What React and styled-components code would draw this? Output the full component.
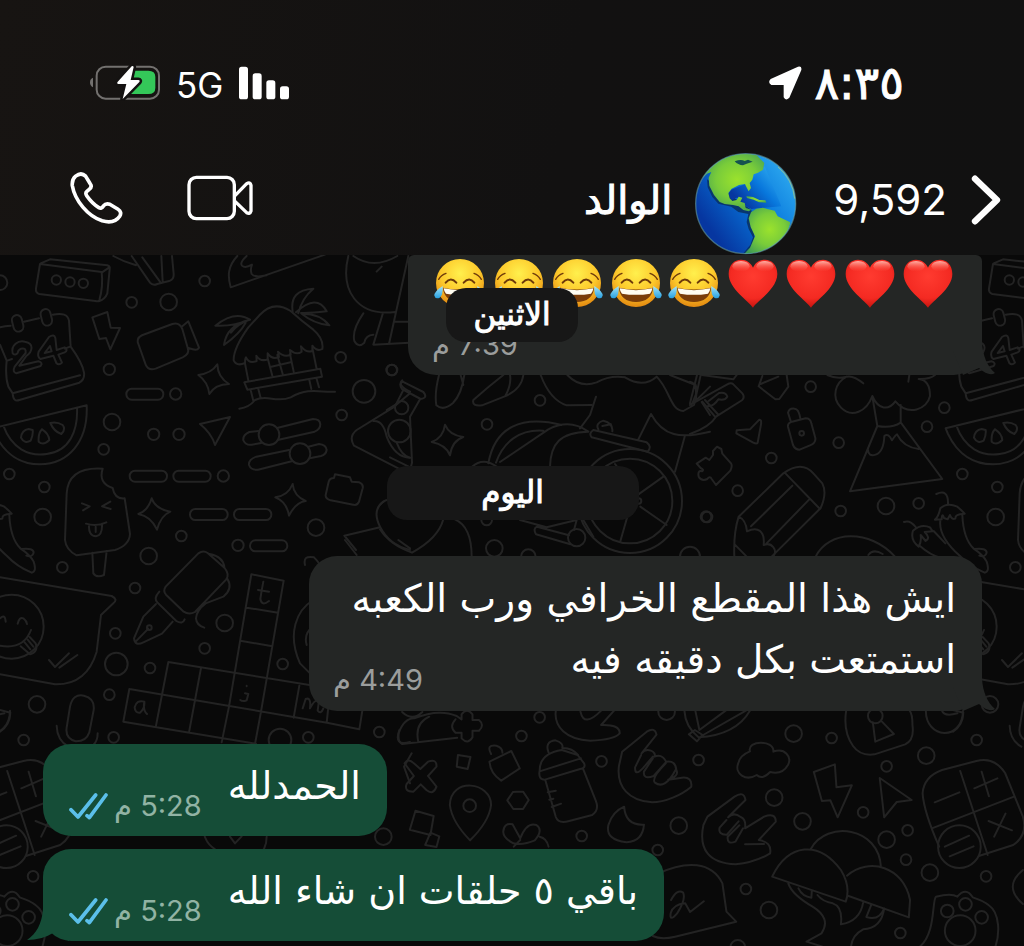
import React from "react";
import styled, { createGlobalStyle } from "styled-components";

const GlobalStyle = createGlobalStyle`
  *, *::before, *::after { box-sizing: border-box; }
  html, body, #root { height: 100%; }
  body {
    margin: 0;
    background: #090909;
    color: #ffffff;
    font-family: Inter, "DejaVu Sans", sans-serif;
  }
  svg { display: block; flex: none; }
`;

const Screen = styled.div`
  display: flex;
  flex-direction: column;
  min-height: 100%;
  overflow: hidden;
`;

const TopArea = styled.header`
  position: relative;
  z-index: 2;
  background: linear-gradient(100deg, #171412 0%, #121111 55%, #111111 100%);
`;

const StatusBar = styled.div`
  display: flex;
  align-items: center;
  justify-content: space-between;
  height: 152px;
  padding: 14px 120px 0 90px;
`;

const StatusGroup = styled.div`
  display: flex;
  align-items: center;
  gap: ${(p) => p.$gap}px;
`;

const Clock = styled.time`
  font: 46px/48px "DejaVu Sans", sans-serif;
  -webkit-text-stroke: 1px currentColor;
`;

const Network = styled.span`
  padding-top: 4px;
  font-size: 35px;
  line-height: 40px;
`;

const NavBar = styled.nav`
  display: flex;
  align-items: center;
  height: 103px;
  padding: 0 23px 0 70px;
`;

const BackButton = styled.button`
  display: flex;
  align-items: center;
  gap: 24px;
  padding: 0 0 8px;
  border: 0;
  background: none;
  color: #ffffff;
  font: 42px/52px Inter, sans-serif;
`;

const ContactButton = styled.button`
  display: flex;
  align-items: center;
  gap: 22px;
  margin: 0 35px 0 auto;
  padding: 0;
  border: 0;
  background: none;
  color: #ffffff;
`;

const ContactName = styled.span`
  padding-bottom: 8px;
  font: 40px/52px "DejaVu Sans", sans-serif;
  -webkit-text-stroke: 1px currentColor;
`;

const IconButton = styled.button`
  margin-right: ${(p) => p.$gap || 0}px;
  padding: 0 0 12px;
  border: 0;
  background: none;
`;

const Chat = styled.main`
  position: relative;
  flex: 1;
  display: flex;
  flex-direction: column;
  align-items: flex-start;
  padding: 0 42px 5px 43px;
`;

const Wallpaper = styled.svg`
  position: absolute;
  inset: 0;
  width: 100%;
  height: 100%;
  fill: none;
  stroke: #232323;
  stroke-width: 2;
  stroke-linecap: round;
  stroke-linejoin: round;
  & * { vector-effect: non-scaling-stroke; }
`;

const DateChip = styled.div`
  position: relative;
  align-self: center;
  min-width: ${(p) => (p.$wide ? 252 : 132)}px;
  height: 54px;
  margin: ${(p) => (p.$wide ? "91px 0 36px" : 0)};
  border-radius: 20px;
  background: #171717;
  font: 31px/52px "DejaVu Sans", sans-serif;
  -webkit-text-stroke: 1px currentColor;
  text-align: center;
`;

const FloatingDate = styled.div`
  position: absolute;
  z-index: 1;
  top: 33px;
  left: 0;
  right: 0;
  display: flex;
  justify-content: center;
`;

const Bubble = styled.article`
  position: relative;
  align-self: ${(p) => (p.$out ? "flex-end" : "flex-start")};
  max-width: 673px;
  margin-top: ${(p) => p.$space || 0}px;
  border-radius: 28px;
  background: ${(p) => (p.$out ? "#154d37" : "#242625")};
`;

const LongBubble = styled(Bubble)`
  display: flow-root;
  padding: 12px 26px 9px 24px;
`;

const ShortBubble = styled(Bubble)`
  display: flex;
  align-items: flex-end;
  gap: 26px;
  padding: 12px 26px 8px;
`;

const EmojiBubble = styled(Bubble)`
  display: flex;
  flex-direction: column;
  padding: 3px 26px 8px 24px;
  border-radius: 6px 6px 28px 28px;
`;

const MessageText = styled.p`
  margin: 0;
  padding-bottom: 12px;
  font: 38px/60px "DejaVu Sans", sans-serif;
  white-space: nowrap;
`;

const LongText = styled.span`
  font: 39px/61px "DejaVu Sans", sans-serif;
`;

const EmojiRow = styled.div`
  display: flex;
  justify-content: space-between;
  width: 520px;
  margin: 0 2px;
`;

const Meta = styled.span`
  display: flex;
  align-items: center;
  align-self: flex-end;
  gap: 6px;
  color: ${(p) => (p.$out ? "#91b3a4" : "#9b9d9c")};
  font: 29px/44px Inter, "DejaVu Sans", sans-serif;
  white-space: nowrap;
`;

const FloatedMeta = styled(Meta)`
  float: left;
  margin-top: 29px;
`;

const EmojiMeta = styled(Meta)`
  margin-top: 15px;
`;

const TailShape = styled.svg`
  position: absolute;
  bottom: 0;
  ${(p) => (p.$out ? "left: -16px;" : "right: -13px;")}
  fill: ${(p) => (p.$out ? "#154d37" : "#242625")};
`;

function Tail({ out }) {
  return out ? (
    <TailShape $out width="42" height="44" viewBox="0 0 42 44" aria-hidden="true">
      <path d="M16 0V12C15 27 9 37 0 43Q15 43 26 36L42 44V0Z" />
    </TailShape>
  ) : (
    <TailShape width="42" height="44" viewBox="0 0 42 44" overflow="visible" aria-hidden="true">
      <path d="M29 0V12C30 25 34 35 42 42Q36 46 26 37L10 44L0 20V0Z" />
    </TailShape>
  );
}

function Ticks() {
  return (
    <svg width="39" height="27" viewBox="0 0 117 81" fill="none" stroke="#5bbfea" strokeWidth="11" strokeLinecap="round" strokeLinejoin="round" role="img" aria-label="مقروءة">
      <path d="M6 50L27 72L80 6M54 68L61 74L111 6" />
    </svg>
  );
}

function JoyFace() {
  return (
    <svg width="52" height="50" viewBox="0 0 156 150" role="img" aria-label="😂">
      <defs>
        <radialGradient id="faceFill" cx="50%" cy="30%" r="72%">
          <stop offset="0" stopColor="#fff04d" />
          <stop offset=".55" stopColor="#fdca2c" />
          <stop offset="1" stopColor="#e2860f" />
        </radialGradient>
        <linearGradient id="tearFill" x1="0" y1="0" x2="0" y2="1">
          <stop offset="0" stopColor="#a5e6fb" />
          <stop offset="1" stopColor="#259fe0" />
        </linearGradient>
      </defs>
      <circle cx="78" cy="75" r="72" fill="url(#faceFill)" />
      <g fill="none" stroke="#6d3a0b" strokeLinecap="round">
        <path d="M14 64Q21 51 36 46M142 64Q135 51 120 46" strokeWidth="4" />
        <path d="M35 74Q50 55 67 74M89 74Q106 55 121 74" strokeWidth="6" />
      </g>
      <path d="M27 89Q78 100 129 89C128 116 107 132 78 132S28 116 27 89Z" fill="#7a3d0a" />
      <path d="M29 91Q78 102 127 91Q126 101 120 107Q78 114 36 107Q30 101 29 91Z" fill="#fffdf2" />
      <path d="M26 84Q28 112 16 120Q4 124 1 113Q0 101 26 84ZM130 84Q128 112 140 120Q152 124 155 113Q156 101 130 84Z" fill="url(#tearFill)" />
    </svg>
  );
}

function Heart() {
  return (
    <svg width="52" height="50" viewBox="0 0 156 150" role="img" aria-label="❤️">
      <defs>
        <radialGradient id="heartFill" cx="50%" cy="35%" r="65%">
          <stop offset="0" stopColor="#ff3b30" />
          <stop offset=".7" stopColor="#f42a22" />
          <stop offset="1" stopColor="#c5140f" />
        </radialGradient>
        <linearGradient id="heartShine" x1="0" y1="0" x2="0" y2="1">
          <stop offset="0" stopColor="#ffc0b5" stopOpacity=".9" />
          <stop offset="1" stopColor="#ff5a4b" stopOpacity="0" />
        </linearGradient>
      </defs>
      <path d="M78 149C66 130 5 92 5 48C5 20 22 5 42 5C59 5 72 15 78 29C84 15 97 5 114 5C134 5 151 20 151 48C151 92 90 130 78 149Z" fill="url(#heartFill)" />
      <ellipse cx="42" cy="25" rx="26" ry="16" fill="url(#heartShine)" />
      <ellipse cx="114" cy="25" rx="26" ry="16" fill="url(#heartShine)" />
    </svg>
  );
}

function Battery() {
  return (
    <svg width="70" height="36" viewBox="90 76 210 108" role="img" aria-label="البطارية قيد الشحن">
      <path d="M99 114V143Q90 139 90 128T99 114Z" fill="#73716f" />
      <rect x="110" y="81" width="187" height="96" rx="27" fill="none" stroke="#73716f" strokeWidth="6" />
      <path d="M208 93H265Q286 93 286 112V144Q286 163 265 163H208Z" fill="#34c759" />
      <path d="M215 80L172 128Q170 133 175 133H199L188 178L238 127Q241 121 235 121H212L221 82Q219 77 215 80Z" fill="#fff" stroke="#141211" strokeWidth="15" paintOrder="stroke" strokeLinejoin="round" />
    </svg>
  );
}

function Signal() {
  return (
    <svg width="51" height="34" viewBox="540 78 153 102" fill="#fff" role="img" aria-label="قوة الإشارة">
      <rect x="540" y="80" width="27" height="98" rx="8" />
      <rect x="581" y="100" width="27" height="78" rx="8" />
      <rect x="622" y="121" width="27" height="57" rx="8" />
      <rect x="663" y="139" width="27" height="39" rx="8" />
    </svg>
  );
}

function LocationArrow() {
  return (
    <svg width="34" height="34" viewBox="623 80 102 102" fill="#fff" aria-hidden="true">
      <path d="M631 119L713 82Q725 79 723 92L687 175Q676 186 670 174V137H633Q621 130 631 119Z" />
    </svg>
  );
}

function Phone() {
  return (
    <svg width="53" height="54" viewBox="31 391 160 162" fill="none" stroke="#fff" strokeWidth="11" strokeLinejoin="round" aria-hidden="true">
      <path d="M48 406Q65 393 78 406L92 429Q99 438 89 446L82 452Q76 457 82 466Q98 489 118 501Q126 506 132 496Q139 487 151 491L176 506Q189 514 181 527C170 544 151 547 128 541C85 527 46 480 38 435Q36 416 48 406Z" />
    </svg>
  );
}

function Video() {
  return (
    <svg width="66" height="46" viewBox="379 402 198 138" fill="none" stroke="#fff" strokeWidth="10" strokeLinejoin="round" aria-hidden="true">
      <rect x="385" y="409" width="136" height="124" rx="22" />
      <path d="M523 464L558 428Q569 422 571 433V510Q568 520 558 515L523 481" />
    </svg>
  );
}

function Chevron() {
  return (
    <svg width="30" height="50" viewBox="1233 403 90 150" fill="none" stroke="#fff" strokeWidth="19" strokeLinecap="round" strokeLinejoin="round" aria-hidden="true">
      <path d="M1245 414L1311 478L1245 542" />
    </svg>
  );
}

function Globe() {
  return (
    <svg width="104" height="104" viewBox="398 337 312 312" role="img" aria-label="🌎">
      <defs>
        <linearGradient id="ocean" x1=".95" y1=".25" x2=".2" y2=".8">
          <stop offset="0" stopColor="#2ba6ee" />
          <stop offset=".45" stopColor="#0877dc" />
          <stop offset="1" stopColor="#0636a0" />
        </linearGradient>
        <radialGradient id="land" cx="57%" cy="45%" r="65%">
          <stop offset="0" stopColor="#9be22d" />
          <stop offset=".5" stopColor="#79cc3a" />
          <stop offset="1" stopColor="#3c9a55" />
        </radialGradient>
        <clipPath id="globeClip"><circle cx="553" cy="492" r="150" /></clipPath>
      </defs>
      <g clipPath="url(#globeClip)">
        <rect x="398" y="337" width="312" height="312" fill="url(#ocean)" />
        <path d="M442 414L444 438L458 467L476 487L515 496L536 512L566 518L561 542L567 563L580 588L572 610L545 643L590 640L575 505Z" fill="#08366f" transform="translate(-5 5)" />
        <path fill="url(#ocean)" d="M510 450L560 430L610 380L660 500L570 508L548 496L534 488L540 474L525 474L510 482L501 462Z" />
        <g fill="url(#land)">
          <path d="M418 420C440 360 505 334 585 345L609 370L605 390L590 399L577 404L573 420L565 430L569 445L562 455L554 440L551 433L533 436L511 447L501 460L505 476L513 484L526 481L532 471L543 474L537 486L550 490L553 505L570 510L562 515L546 511L532 500L515 496L490 493L475 487L458 466L444 438L442 414L450 397L437 402Z" />
          <path d="M569 518L585 507L605 504L618 508L640 513L649 530L671 540L687 548C680 590 643 631 594 646L543 649L566 624L581 590L568 562L562 536Z" />
          <path d="M555 469L575 472L594 481L612 482L615 489L593 488L577 480L557 475Z" />
        </g>
        <path d="M520 365Q540 357 550 364L560 360L574 366L556 372L545 377Q530 376 520 365Z" fill="#16534f" />
      </g>
      <circle cx="553" cy="492" r="150" fill="none" stroke="#6daab0" strokeOpacity=".55" strokeWidth="4" />
      <path d="M650 382Q694 420 700 477" fill="none" stroke="#bfd66b" strokeOpacity=".6" strokeWidth="3" />
    </svg>
  );
}

/* Rings are listed as [x, y, r]; ratio keeps them round in a group scaled unevenly. */
function Rings({ items, ratio = 1 }) {
  return items.map(([x, y, r]) => <ellipse key={`${x}-${y}`} cx={x} cy={y} rx={r * ratio} ry={r} />);
}

function BeachDoodles() {
  return (
    <g transform="translate(0 -5) scale(.33333)">
      <Rings items={[[0,98,22],[169,90,14],[210,96,14],[250,100,14],[395,157,16],[506,156,25],[614,93,16],[328,358,17],[527,432,17],[336,516,25],[461,553,17],[537,553,17],[311,598,16],[28,672,16],[133,711,16],[128,801,25],[670,678,17],[544,858,16],[948,833,25],[1022,322,16],[1176,360,16],[1092,424,34],[1025,495,16],[714,886,17],[1205,473,20],[1198,543,34]]} />
      <path d="M120 42L305 66Q310 110 298 150Q296 156 286 153L118 132Q106 128 108 115ZM122 40L150 28L322 46Q331 48 329 58L322 130Q315 148 296 154M306 67L328 52" />
      <path d="M340 18Q370 35 408 46M395 18L450 98Q458 108 472 102L510 92Q522 88 521 72L516 18M427 22L482 98M484 18L488 95" />
      <path d="M712 18C682 50 683 80 692 112L975 14M740 18Q718 38 726 47Q735 56 756 44Q750 60 755 72Q764 84 800 76" />
      <path d="M1045 18C1020 120 1070 200 1185 186M1060 18Q1120 60 1192 18M1130 65L1145 50M1225 18L1167 282M1090 190Q1055 240 1063 273Q1075 295 1093 278Q1097 255 1120 254M1148 192L1120 284L1228 278M1185 215H1230" />
      <path d="M0 232Q15 228 32 227M72 215L117 205M158 194Q202 185 207 212L212 290Q248 340 252 368Q255 388 238 398L58 450Q40 458 38 430L240 376M0 284L20 332Q15 380 25 410L38 430M22 332L36 327M195 296L210 290" />
      <rect x="38" y="195" width="30" height="50" rx="15" transform="rotate(-14 53 220)" /><rect x="124" y="177" width="30" height="50" rx="15" transform="rotate(-14 139 202)" />
      <path d="M38 310C32 285 55 270 75 275C103 280 98 304 79 318L58 347L115 334Q130 338 122 348L49 370Q36 366 44 350L77 309Q79 292 63 296Q54 300 53 309Q46 318 38 310M116 305L147 261Q163 251 166 264L170 300L194 292Q206 300 194 307L175 314L186 338Q177 347 169 339L160 317L121 327Q111 320 116 305M134 309L155 304L150 288Z" />
      <path d="M277 202L322 186L332 233L360 234L331 298L318 264L298 267ZM436 252L517 222Q538 215 547 237L563 293Q570 312 548 322L467 356Q445 363 437 344L413 276Q411 259 436 252M545 230L565 214L597 293Q592 302 578 298L565 294" />
      <path d="M595 375Q635 370 652 343Q653 382 687 402Q645 403 628 432Q624 396 595 375M455 745Q466 777 511 785Q483 796 471 839Q453 799 415 792Q444 782 455 745M878 702Q881 737 917 753Q887 757 867 797Q860 755 826 742Q864 737 878 702" />
      <path d="M745 232Q700 295 701 331Q710 350 735 339Q735 322 738 322Q747 342 770 333L769 317Q781 336 803 328V310Q816 330 837 321L834 305Q852 324 872 314L870 300Q890 317 905 305L903 289Q920 310 937 303V287Q951 306 967 297Q972 266 940 239Q905 213 872 183Q820 150 779 195ZM735 340L745 392M803 325L817 377M870 312L881 365M938 298L950 357M733 397L961 356L966 380L742 419ZM832 315L848 372M814 350L872 337M752 420L760 452M775 417L782 444M928 390L934 417M950 387L957 412M718 476Q748 472 765 450C800 432 830 460 872 442C930 410 963 429 1005 425" />
      <path d="M750 209Q705 180 646 227Q700 230 750 209M750 209Q680 225 672 285Q720 250 737 218M750 209Q713 222 693 248M878 184Q868 120 940 116Q905 145 895 190M888 187Q950 130 980 184Q930 190 903 189M905 191Q960 190 988 226Q940 220 905 191" />
      <rect x="379" y="416" width="111" height="33" rx="16"/><rect x="389" y="662" width="112" height="33" rx="16"/><rect x="520" y="662" width="112" height="33" rx="16"/><rect x="570" y="777" width="113" height="33" rx="16"/><rect x="702" y="777" width="112" height="33" rx="16"/><rect x="750" y="871" width="112" height="33" rx="16"/>
      <path d="M-22 535L-15 552C15 615 65 643 120 643C205 642 265 575 260 466L-22 535M10 527C35 595 85 620 140 612C210 603 234 540 231 475M86 537Q65 540 63 563Q74 583 92 572Q100 555 98 540ZM126 538Q114 550 116 575Q130 588 148 570Q146 550 126 538M151 519Q162 545 184 552Q198 538 188 525Q170 514 151 519M600 522L690 501L645 585Q635 550 600 522" />
      <path d="M775 543L748 546Q728 555 730 571Q738 587 755 584L784 579M831 534L939 507Q960 507 961 523Q961 538 944 545L836 569M867 600L769 620Q745 629 747 645Q753 661 774 659L878 633M925 590L957 582Q978 584 980 600Q978 614 963 618L929 625"/><circle cx="807" cy="554" r="31"/><circle cx="900" cy="611" r="31"/>
      <path d="M308 656Q205 650 200 730L195 870Q198 900 230 916L345 900Q388 886 390 852L374 745Q344 748 338 714Q294 700 308 656M246 760L269 769L249 781M331 755L306 769L332 777M258 821Q290 831 319 817M267 824Q265 858 288 859Q308 855 306 821M287 830V846M277 908L280 970Q290 985 312 975L320 903" />
      <path d="M1230 430L1180 472L1070 540Q1045 560 1062 587L1195 655M1120 513Q1150 510 1160 560Q1185 623 1230 623M1207 391Q1190 405 1230 425M977 735L986 695Q989 684 1002 684L1005 673L1050 682L1055 695L1078 697Q1091 702 1088 715L1077 755Q1070 768 1060 764L992 751Q976 746 977 735M1150 755Q1115 780 1140 830C1160 870 1190 890 1230 900M1140 832L1033 857L1068 900" />
    </g>
  );
}

function WritingDoodles() {
  return (
    <g transform="translate(0 285) scale(.33333)">
      <Rings items={[[187,82,16],[446,48,25],[405,144,16],[346,280,16],[349,372,34],[450,384,16],[328,464,16],[111,493,25],[71,600,16],[341,592,16],[674,249,25],[614,325,16],[848,372,16],[925,592,16],[1138,576,16],[840,600,34],[35,260,96],[1150,890,25]]} />
      <path d="M0 112L335 168Q355 178 340 190L303 225L290 335Q260 435 165 433L0 403M0 235Q15 220 17 245M53 251Q58 230 70 235Q80 243 81 252M0 317Q70 330 93 270M62 319L90 343Q116 335 107 310L89 291M74 307L91 328M83 299L100 320M147 360L165 381L207 340M178 383L232 345" />
      <path d="M497 140L595 40Q610 30 623 39L674 84Q690 104 678 119L585 216Q567 226 551 215L498 164Q488 153 497 140M478 155Q460 175 472 187L529 243Q548 254 554 238M629 42Q670 50 673 82M682 116Q700 145 670 170L617 190Q590 210 588 235Q589 255 613 263M468 192L430 230L402 295Q405 320 430 307L486 281L518 245M407 305L445 266"/><circle cx="448" cy="263" r="7" />
      <path d="M754 103L851 122L783 515L765 612M754 103L687 500L665 607M740 203L834 218M721 302L817 319M505 366L1095 462L1078 568L981 548M505 366L467 562M603 384L567 577M898 437L881 533M370 545L768 611M388 447L981 548M388 447L370 545M990 455L980 548" />
      <path d="M790 125Q784 155 781 177Q785 200 807 183M774 150L807 155M433 485Q410 478 404 502Q405 520 420 518Q435 505 433 485Q428 510 441 522M735 460L745 462L740 481Q728 486 721 480M740 437V439M908 505L917 477Q934 470 930 505Q945 476 957 482L953 512Q963 524 970 505" />
      <path d="M210 500Q218 460 252 467Q285 475 281 510L268 577Q258 605 227 604Q195 595 200 563ZM170 557Q171 600 205 620M293 580Q293 603 280 615M0 510L31 518Q30 555 0 575M915 75Q908 45 942 52Q960 70 960 80M940 180C890 210 860 280 900 370L940 410M940 260Q910 280 920 315" />
      <path d="M610 870Q615 920 670 940M800 890Q800 930 770 950M690 890L705 910L725 889M1035 0L1070 45M1195 0L1230 25M1198 570Q1180 620 1230 606M1235 640L1212 680L1230 730" />
    </g>
  );
}

function TravelDoodles() {
  return (
    <g transform="translate(380 115) scale(.33333)">
      <Rings items={[[35,0,16],[480,91,16],[321,163,16],[343,535,25],[320,450,16],[590,503,26],[978,440,16],[445,560,22],[776,393,8]]} />
      <circle cx="750" cy="393" r="156"/><circle cx="750" cy="393" r="127"/>
      <path d="M68 35L130 66Q145 84 122 87L66 57Q55 41 68 35M70 60L48 103L20 120M120 88L90 140L96 278L92 293L30 262M50 218Q65 258 90 263M195 164Q208 196 250 201Q216 212 210 256Q198 224 155 216Q190 204 195 164" />
      <path d="M177 15Q163 70 169 106Q190 124 219 99Q245 72 253 15M242 15L250 45M370 15Q325 50 280 90Q275 110 306 106L380 77Q425 55 430 15M390 15Q395 42 376 78M482 15Q510 90 560 106L635 105M562 15Q600 55 650 37Q690 15 735 22Q790 55 830 20C870 60 870 120 910 123L942 105Q955 70 947 45L870 15M962 15L944 96L990 50M965 96L990 135" />
      <path d="M325 280C345 170 425 135 545 165M348 278C370 215 420 177 490 182M360 276L505 178Q570 145 625 185M510 290C512 220 540 187 625 185M648 80L630 135L600 175M640 180L800 217Q817 230 803 245L635 202Q625 190 640 180M655 178Q645 160 670 152Q700 160 697 184M667 168L693 163M775 208L813 132C850 200 900 207 990 185M914 200L885 305M276 290Q310 260 350 290" />
      <path d="M850 320L770 377M781 410L860 465M742 440L721 514M705 282L712 291M0 405Q12 390 24 390M0 478Q30 525 96 548Q175 505 190 448M225 448Q275 470 275 560M420 450L500 472L590 450L582 480M471 470L567 496M571 523L468 493Q458 476 471 470M610 450L640 500" />
    </g>
  );
}

function NatureDoodles() {
  return (
    <g transform="translate(690 115) scale(.33333)">
      <Rings items={[[362,50,16],[244,264,16],[143,362,16],[51,441,16],[446,218,16],[452,423,16],[588,408,25],[686,400,16],[763,113,16],[711,170,16],[335,190,7],[0,560,30]]} />
      <path d="M0 192Q60 170 78 140L157 90Q165 80 157 70L130 43Q123 37 112 43L0 105M37 95L75 140M45 90L83 132M54 108Q70 110 85 88Q105 92 112 80Q108 65 87 69L56 93M21 15L0 100M35 15L130 28L140 15M0 35Q20 40 18 72L5 105M217 18L206 49L256 88L268 87L295 50L290 15M212 42L265 20" />
      <path d="M140 181L180 178L208 149Q215 148 213 163L203 218Q200 223 190 218L139 190ZM302 153L294 128Q298 113 314 116Q326 116 331 145M306 155L347 145Q361 145 364 160L376 204Q378 219 360 226L329 239Q315 239 309 225L294 170Q292 160 306 155M69 255L69 243L81 230L94 237L97 251L123 280Q128 289 121 302L78 345L65 327Q60 317 52 327Q35 335 26 320Q22 300 36 304Q44 300 32 294L20 281L47 263L58 270Z" />
      <path d="M146 440L280 310Q335 270 370 310L397 340Q412 370 392 414L245 560M183 469L307 347M229 521L357 389M284 308L390 417M146 440Q168 450 171 484C205 467 225 485 221 525C245 515 264 540 250 560M146 440Q130 490 133 560M134 523L170 560M377 560C415 480 540 477 615 560M535 555Q550 535 578 552" />
      <path d="M470 20C435 38 423 83 453 113C485 145 530 125 547 78C565 120 596 122 616 94C655 140 712 118 720 78Q720 30 686 27M412 15Q440 28 470 20Q490 15 520 40M658 15L655 35M686 27Q720 28 735 15M548 85L562 168L480 364L757 327L632 157V105M562 168Q604 176 632 158M534 240Q535 261 557 254Q581 246 583 198Q595 188 606 211Q616 195 621 193Q640 231 686 237" />
      <path d="M739 372Q775 356 774 400M642 456Q660 449 677 471M735 449Q745 442 751 415Q771 396 802 410Q814 420 824 431L810 433Q796 435 796 446Q785 450 780 435L773 448L762 444Q756 426 755 448L735 449M751 452Q745 500 810 558Q840 590 884 608Q900 605 890 575Q880 555 850 535Q820 505 817 435M686 530Q660 510 669 482Q694 460 720 472L728 484L704 486Q723 504 707 513L692 495Q695 516 686 530M690 528Q720 555 755 565M731 483L766 520M854 537Q890 533 890 548Q887 563 868 557" />
    </g>
  );
}

function PlayDoodles() {
  return (
    <g transform="translate(390 445) scale(.4044 .33333)">
      <Rings ratio={0.824} items={[[370,52,16],[325,108,16],[523,184,16],[684,35,25],[763,180,16],[998,101,25],[1092,114,16],[1326,167,25],[1228,199,16],[950,293,25],[1170,337,16],[1020,364,25],[1228,419,25],[1280,391,16],[1276,479,16],[1335,518,25],[1474,529,16],[714,377,25],[474,408,16],[662,450,16],[880,567,16],[937,630,25],[860,742,22],[1262,699,16],[197,317,19],[1200,48,22],[1410,692,46],[1408,440,64],[1378,633,19],[1423,613,19],[1463,652,19]]} />
      <path d="M30 132Q18 125 22 98Q35 55 60 55Q120 25 165 48L177 58V43Q190 22 204 43V60H220Q235 75 220 92H204V112Q193 135 177 115V98H162Q145 80 162 58M70 126Q60 70 97 50M30 132L166 113M30 36Q55 65 80 36M410 32C405 80 435 118 495 122Q555 119 568 100Q569 73 522 75L554 32M471 35Q480 84 522 32M728 32Q730 80 763 112Q855 105 890 32M770 108L880 32M765 90L830 32M765 90L755 32M739 103L754 90L773 105L759 124Z" />
      <path d="M36 190Q45 173 59 190L75 207L94 185Q116 175 115 200L94 228L115 260Q107 287 90 270L76 253L58 275Q34 275 41 252L59 228ZM168 165L199 171L192 207L165 200ZM250 162Q237 133 263 137Q278 142 278 158M246 185L300 153L321 205L275 242Q248 220 246 185M313 275H329L343 300L329 327H305L290 301L304 276ZM148 315C150 230 250 245 250 315Q245 365 198 421Q153 365 148 315M63 332L108 348L100 405L49 389ZM100 398L122 409L115 441L87 435Z" />
      <path d="M392 157Q382 125 409 121Q430 129 426 144Q450 143 465 165M370 212Q370 160 425 150L464 165L480 190Q485 204 470 207L383 239Q366 239 370 212M370 214L472 175M384 240L410 351Q416 372 443 363L500 345Q518 330 509 303L477 205M390 277L410 272M394 299L404 296M400 321L423 311M579 320Q582 377 628 374Q625 424 585 427Q532 420 540 375Q550 335 579 320M280 395Q282 367 303 373L322 415Q338 365 362 375Q380 390 358 421Q330 436 305 430Q280 414 280 395M370 410Q388 415 392 440M306 440L322 420" />
      <path d="M574 155L635 95Q655 80 659 104L622 160C635 140 660 155 654 170Q672 160 683 185Q706 180 708 210Q716 228 688 239L722 233Q748 230 745 260C721 285 680 307 648 307C590 302 560 260 566 199ZM650 170L625 205Q605 230 606 202L621 165M682 187L652 228Q625 240 628 215L650 175M706 210Q680 270 655 248Q645 235 682 190M785 350L852 290Q875 271 879 300L836 352Q850 335 867 351Q881 357 878 385L925 350Q954 337 954 365L912 420Q945 426 940 460Q904 487 855 493C790 490 762 450 775 375ZM832 360L815 383Q811 405 833 404L862 364M873 385L854 425Q833 435 835 410L864 376M878 433L925 432" />
      <path d="M890 154C882 120 951 119 948 155C976 143 995 170 984 195Q970 225 940 216Q920 241 907 225C880 245 851 221 861 190Q865 166 890 154M1048 216L1100 193L1104 262L1142 256L1107 352L1089 301L1068 303ZM1211 234L1290 300L1253 306L1222 352ZM1128 32Q1120 95 1145 138Q1163 169 1198 163L1274 133Q1297 120 1292 76Q1292 42 1285 32M1194 67L1200 125L1246 102L1216 64M1325 32C1325 117 1415 125 1417 32M1365 32Q1370 51 1403 40" />
      <path d="M1317 280Q1320 230 1365 210L1450 183Q1495 170 1521 219L1565 350Q1578 405 1541 435L1456 468M1317 280Q1320 335 1358 440M1410 213L1478 465M1340 385L1543 290M1347 307L1408 277M1445 265L1502 235M1463 215L1481 289M1480 363L1538 391M1522 341L1494 410M1372 440L1432 407M1384 469L1443 439" />
      <path d="M945 530C985 430 1060 420 1115 510Q1140 560 1127 605ZM1041 446C1080 360 1210 380 1214 502M1130 527C1185 470 1270 500 1286 600L1283 652L1134 588M985 551Q995 585 1045 620Q1092 655 1067 700L1030 725L1070 740M1010 565Q1020 590 1042 593L1043 573M1057 585Q1070 605 1095 610Q1120 620 1115 673Q1162 664 1170 608M1190 615L1178 651Q1210 663 1222 625Q1215 685 1170 688Q1143 705 1140 740" />
      <path d="M660 522C735 480 795 485 822 550L832 635L856 665L705 710Q670 720 650 708M695 600Q710 565 725 578Q732 600 710 640Q691 667 694 640Q700 613 730 610L742 636L776 604M1310 740C1350 700 1340 600 1350 590Q1388 579 1403 590Q1424 560 1441 592Q1470 604 1480 615C1510 640 1507 705 1497 740M1565 510Q1515 560 1565 612" />
    </g>
  );
}

function Doodles() {
  return (
    <Wallpaper aria-hidden="true">
      <defs>
        <g id="doodles">
          <BeachDoodles />
          <WritingDoodles />
          <TravelDoodles />
          <NatureDoodles />
          <PlayDoodles />
        </g>
      </defs>
      {[-953, 0, 953, 1906].map((x) => <use key={x} href="#doodles" x={x} />)}
    </Wallpaper>
  );
}

export default function App() {
  return (
    <Screen dir="rtl" lang="ar">
      <GlobalStyle />
      <TopArea>
        <StatusBar>
          <StatusGroup $gap={12}>
            <Clock>٨:٣٥</Clock>
            <LocationArrow />
          </StatusGroup>
          <StatusGroup $gap={16}>
            <Signal />
            <Network>5G</Network>
            <Battery />
          </StatusGroup>
        </StatusBar>
        <NavBar>
          <BackButton type="button" aria-label="رجوع 9,592">
            <Chevron />
            <span>9,592</span>
          </BackButton>
          <ContactButton type="button">
            <Globe />
            <ContactName>الوالد</ContactName>
          </ContactButton>
          <IconButton type="button" aria-label="مكالمة فيديو"><Video /></IconButton>
          <IconButton type="button" aria-label="مكالمة صوتية" $gap={64}><Phone /></IconButton>
        </NavBar>
      </TopArea>

      <Chat>
        <Doodles />
        <FloatingDate><DateChip>الاثنين</DateChip></FloatingDate>
        <EmojiBubble>
          <EmojiRow>
            {[0, 1, 2, 3].map((n) => <Heart key={n} />)}
            {[0, 1, 2, 3, 4].map((n) => <JoyFace key={n} />)}
          </EmojiRow>
          <EmojiMeta>7:39 م</EmojiMeta>
          <Tail />
        </EmojiBubble>

        <DateChip $wide>اليوم</DateChip>

        <LongBubble>
          <LongText>ايش هذا المقطع الخرافي ورب الكعبه استمتعت بكل دقيقه فيه</LongText>
          <FloatedMeta>4:49 م</FloatedMeta>
          <Tail />
        </LongBubble>

        <ShortBubble $out $space={33}>
          <MessageText>الحمدلله</MessageText>
          <Meta $out>5:28 م<Ticks /></Meta>
        </ShortBubble>

        <ShortBubble $out $space={13}>
          <MessageText>باقي ٥ حلقات ان شاء الله</MessageText>
          <Meta $out>5:28 م<Ticks /></Meta>
          <Tail out />
        </ShortBubble>
      </Chat>
    </Screen>
  );
}
